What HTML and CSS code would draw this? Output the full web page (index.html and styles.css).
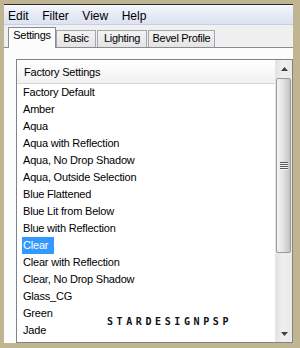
FILE: index.html
```html
<!DOCTYPE html>
<html>
<head>
<meta charset="utf-8">
<link rel="stylesheet" href="styles.css">
</head>
<body>
<div class="window">
  <div class="menubar">
    <span class="menu">Edit</span>
    <span class="menu">Filter</span>
    <span class="menu">View</span>
    <span class="menu">Help</span>
  </div>
  <div class="tabs">
    <div class="tab tab-settings active">Settings</div>
    <div class="tab tab-basic">Basic</div>
    <div class="tab tab-lighting">Lighting</div>
    <div class="tab tab-bevel">Bevel Profile</div>
  </div>
  <div class="page">
    <div class="listbox">
      <div class="listcol">
        <div class="header">Factory Settings</div>
        <div class="rows">
          <div class="row"><span>Factory Default</span></div>
          <div class="row"><span>Amber</span></div>
          <div class="row"><span>Aqua</span></div>
          <div class="row"><span>Aqua with Reflection</span></div>
          <div class="row"><span>Aqua, No Drop Shadow</span></div>
          <div class="row"><span>Aqua, Outside Selection</span></div>
          <div class="row"><span>Blue Flattened</span></div>
          <div class="row"><span>Blue Lit from Below</span></div>
          <div class="row"><span>Blue with Reflection</span></div>
          <div class="row selected"><span>Clear</span></div>
          <div class="row"><span>Clear with Reflection</span></div>
          <div class="row"><span>Clear, No Drop Shadow</span></div>
          <div class="row"><span>Glass_CG</span></div>
          <div class="row"><span>Green</span></div>
          <div class="row"><span>Jade</span></div>
        </div>
      </div>
      <div class="scrollbar">
        <div class="sbtn"><svg width="7" height="4" viewBox="0 0 7 4"><path d="M0 4 L3.5 0 L7 4 Z" fill="#3f3f3f"/></svg></div>
        <div class="track">
          <div class="thumb">
            <div class="grip"><i></i><i></i><i></i><i></i></div>
          </div>
        </div>
        <div class="sbtn down"><svg width="7" height="4" viewBox="0 0 7 4"><path d="M0 0 L7 0 L3.5 4 Z" fill="#3f3f3f"/></svg></div>
      </div>
    </div>
  </div>
</div>
<div class="watermark">STARDESIGNPSP</div>
</body>
</html>
```
FILE: styles.css
```css
html, body {
  margin: 0;
  padding: 0;
}
body {
  width: 300px;
  height: 348px;
  overflow: hidden;
  background: #c0b592;
  padding: 4px 0 0 4px;
  box-sizing: border-box;
  position: relative;
  font-family: "Liberation Sans", Arial, sans-serif;
  color: #000;
}
.window {
  width: 289px;
  height: 339px;
  box-sizing: border-box;
  border-top: 1px solid #2e2e2e;
  background: #f0f0f0;
  display: flex;
  flex-direction: column;
}
.menubar {
  height: 20px;
  box-sizing: border-box;
  padding: 3px 0 0 4px;
  display: flex;
  gap: 13.5px;
  background: linear-gradient(#f7f8fd 0%, #e8ecf7 40%, #dce2f3 100%);
  border-bottom: 1px solid #c9cfe2;
  font-size: 12px;
  line-height: 16px;
}
.tabs {
  height: 22px;
  display: flex;
  align-items: flex-end;
  padding-left: 4px;
  position: relative;
  z-index: 1;
  font-size: 11px;
  letter-spacing: -0.3px;
}
.tab {
  box-sizing: border-box;
  height: 17px;
  line-height: 15px;
  text-align: center;
  border: 1px solid #a3a6ad;
  border-bottom: none;
  background: linear-gradient(#f3f3f3, #e4e4e4);
  color: #000;
}
.tab.active {
  height: 21px;
  margin-bottom: -1px;
  line-height: 15px;
  background: #fcfcfc;
  border-color: #898c95;
}
.tab-settings { width: 48px; }
.tab-basic { width: 40px; }
.tab-lighting { width: 50px; margin-left: 1px; }
.tab-bevel { width: 67px; margin-left: 1px; }
.page {
  flex: 1;
  display: flex;
  flex-direction: column;
  background: #fcfcfc;
  border-top: 1px solid #898c95;
  padding: 11px 0 0 12px;
  min-height: 0;
}
.listbox {
  flex: 1;
  min-height: 0;
  display: flex;
  border: 1px solid #7f838b;
  background: #fff;
  overflow: hidden;
}
.listcol {
  flex: 1;
  display: flex;
  flex-direction: column;
  min-width: 0;
  font-size: 11px;
  letter-spacing: -0.2px;
}
.header {
  height: 24px;
  box-sizing: border-box;
  border-bottom: 1px solid #d6d6d6;
  background: linear-gradient(#ffffff, #f1f1f2);
  padding: 1px 0 0 7px;
  line-height: 23px;
}
.rows {
  flex: 1;
  overflow: hidden;
}
.row {
  height: 17px;
  line-height: 17px;
  padding-left: 5px;
  white-space: nowrap;
}
.row span {
  display: inline-block;
  padding: 0 6px 0 1px;
}
.row.selected span {
  background: #3399ff;
  color: #fff;
}
.scrollbar {
  width: 16px;
  display: flex;
  flex-direction: column;
  background: linear-gradient(90deg, #e3e3e3, #efefef 40%, #eaeaea);
  border-left: 1px solid #e6e6e6;
}
.sbtn {
  height: 17px;
  display: flex;
  align-items: center;
  justify-content: center;
}
.track {
  flex: 1;
  display: flex;
  flex-direction: column;
  padding-top: 1px;
}
.thumb {
  height: 175px;
  box-sizing: border-box;
  margin: 0 1px 0 0;
  border: 1px solid #9a9a9a;
  border-radius: 2px;
  background: linear-gradient(90deg, #f4f4f4 0%, #e6e6e6 40%, #d2d2d2 75%, #c2c2c2 100%);
  display: flex;
  align-items: center;
  justify-content: center;
}
.grip {
  display: flex;
  flex-direction: column;
  gap: 1px;
}
.grip i {
  display: block;
  width: 8px;
  height: 1px;
  background: #5a5a5a;
  box-shadow: 0 1px 0 #f5f5f5;
}
.watermark {
  position: absolute;
  left: 107px;
  top: 316px;
  font-family: "DejaVu Sans Mono", monospace;
  font-size: 10px;
  font-weight: bold;
  letter-spacing: 3.6px;
  color: #111;
  line-height: 12px;
}
```
